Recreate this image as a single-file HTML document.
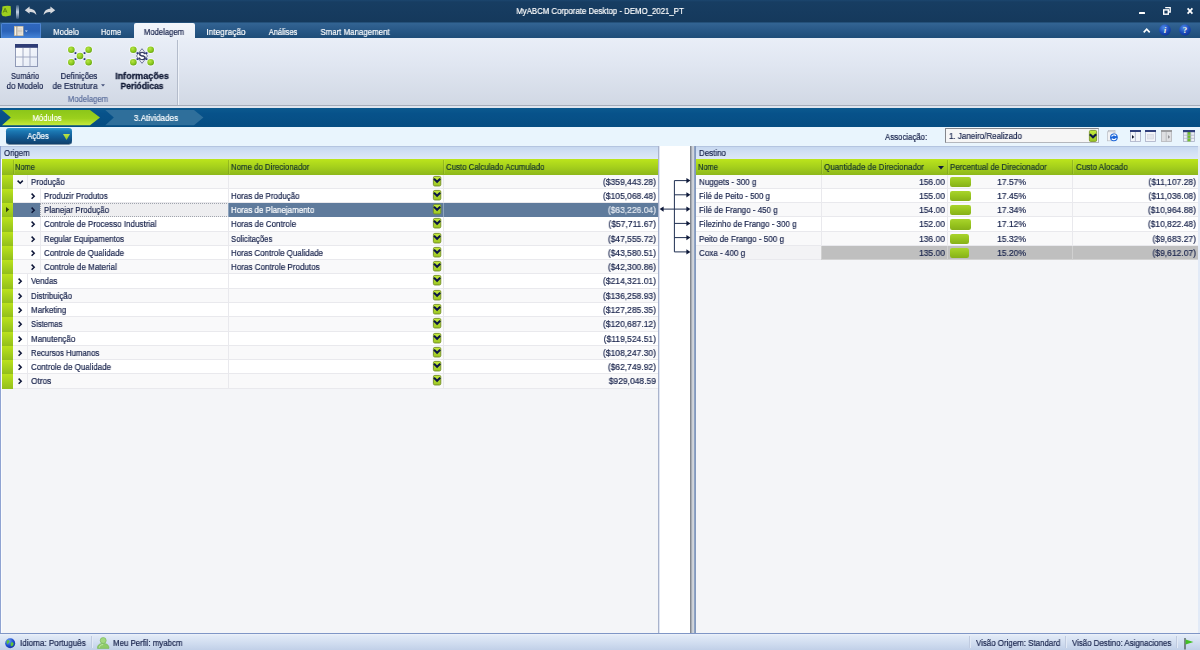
<!DOCTYPE html><html lang="pt"><head><meta charset="utf-8"><title>MyABCM Corporate Desktop - DEMO_2021_PT</title><style>
*{box-sizing:border-box;margin:0;padding:0}
html,body{width:1200px;height:650px;overflow:hidden;background:#f4f5f8}
body{position:relative;font-family:"Liberation Sans",sans-serif;font-size:9.2px;color:#16214a;line-height:10px;white-space:nowrap;-webkit-text-stroke:0.2px}
.a{position:absolute}
.t{position:absolute;height:10px;line-height:10px;will-change:transform;transform-origin:0 50%;transform:scaleX(.856)}
.t.c{transform-origin:50% 50%}
.n{position:absolute;height:10px;line-height:10px;text-align:right;will-change:transform;transform-origin:100% 50%;transform:scaleX(.926)}
.w{color:#fff}
.c{text-align:center}
.b{font-weight:bold}
svg{position:absolute;overflow:visible}
</style></head><body>
<svg width="0" height="0" style="left:0;top:0"><defs><linearGradient id="gcb" x1="0" y1="0" x2="0" y2="1"><stop offset="0" stop-color="#c4ea3c"/><stop offset="1" stop-color="#9cc722"/></linearGradient></defs></svg>
<div class="a" style="left:0px;top:0px;width:1200px;height:22px;background:linear-gradient(#1c466e 0,#173d62 2px,#15395c 100%)"></div>
<svg style="left:1px;top:5px" width="12" height="13" viewBox="0 0 12 13"><path d="M1.4 1.6 Q5 0.2 9.6 1 Q10.4 6 9.8 10.6 Q5 12 1.6 11 Q-0.2 9 0.6 7 Q1.6 4 1.4 1.6 Z" fill="#9ccf1e"/><path d="M2.2 7.6 L4.1 3.2 L6 7.6 M2.9 6.2 H5.3" stroke="#5e8a14" stroke-width="1" fill="none"/></svg>
<div class="a" style="left:16.2px;top:5px;width:2.8px;height:13.5px;background:linear-gradient(#35587c,#c3d2e4 50%,#35587c);border-radius:1.2px"></div>
<svg style="left:24px;top:6px" width="14" height="10" viewBox="0 0 14 10"><path d="M0.8 4.2 L5.6 0.6 L5.6 2.8 C9.5 2.8 12 5 12.4 9 C10.8 6.6 8.8 5.8 5.6 5.9 L5.6 7.8 Z" fill="#d6d9dd"/></svg>
<svg style="left:42px;top:6px" width="14" height="10" viewBox="0 0 14 10"><path d="M13.2 4.2 L8.4 0.6 L8.4 2.8 C4.5 2.8 2 5 1.6 9 C3.2 6.6 5.2 5.8 8.4 5.9 L8.4 7.8 Z" fill="#d6d9dd"/></svg>
<div class="t w c" style="left:399.6px;top:6.3px;width:400px;;transform:scaleX(0.8520)">MyABCM Corporate Desktop - DEMO_2021_PT</div>
<div class="a" style="left:1139.3px;top:12.2px;width:6px;height:2.2px;background:#fff;border-radius:.5px"></div>
<svg style="left:1163px;top:7px" width="8" height="8" viewBox="0 0 8 8"><path d="M2.2 0.6 H7.2 V5 H5.6" fill="none" stroke="#fff" stroke-width="1.3"/><rect x="0.7" y="2.9" width="4.6" height="4.3" fill="none" stroke="#fff" stroke-width="1.4"/></svg>
<svg style="left:1186.5px;top:8px" width="6" height="6" viewBox="0 0 6 6"><path d="M0.6 0.4 L5.4 5.6 M5.4 0.4 L0.6 5.6" stroke="#fff" stroke-width="1.7"/></svg>
<div class="a" style="left:0px;top:22px;width:1200px;height:16px;background:linear-gradient(#1d476e 0,#326392 1.5px,#295988 45%,#1e4c78)"></div>
<div class="a" style="left:1px;top:23px;width:40px;height:15px;background:linear-gradient(#2f67bd,#2a62b8 50%,#4584d8);border:1px solid #4f86d4;border-bottom:none;border-radius:1.5px 1.5px 0 0"></div>
<svg style="left:14px;top:25.5px" width="16" height="10" viewBox="0 0 16 10"><rect x="0.3" y="0.3" width="8.8" height="9.4" fill="#f7f2e8" stroke="#c9b48c" stroke-width=".6"/><path d="M2.9 0.4 V9.6" stroke="#7c7466" stroke-width=".8"/><path d="M5 1.6 V8.6 M7 1.6 V8.6 M3.6 5 H8.4" stroke="#b9b2a6" stroke-width=".7"/><path d="M10.8 4.6 H13.8 L12.3 6.1 Z" fill="#cbd9f0"/></svg>
<div class="a" style="left:134px;top:23px;width:61px;height:15.5px;background:linear-gradient(#f3f6fb,#e9eef7);border-radius:2px 2px 0 0"></div>
<div class="t w c" style="left:15.5px;top:26.6px;width:100px;;transform:scaleX(0.8527)">Modelo</div>
<div class="t w c" style="left:60.8px;top:26.6px;width:100px;;transform:scaleX(0.8158)">Home</div>
<div class="t  c" style="left:113.9px;top:26.6px;width:100px;;transform:scaleX(0.8393)">Modelagem</div>
<div class="t w c" style="left:176.4px;top:26.6px;width:100px;;transform:scaleX(0.9051)">Integração</div>
<div class="t w c" style="left:233.4px;top:26.6px;width:100px;;transform:scaleX(0.8263)">Análises</div>
<div class="t w c" style="left:305.3px;top:26.6px;width:100px;;transform:scaleX(0.8589)">Smart Management</div>
<svg style="left:1143px;top:28px" width="8" height="5" viewBox="0 0 8 5"><path d="M0.7 4.4 L3.7 1.2 L6.7 4.4" fill="none" stroke="#fff" stroke-width="1.6"/></svg>
<svg style="left:1159px;top:24.4px" width="12" height="12" viewBox="0 0 12 12"><defs><radialGradient id="g1" cx=".4" cy=".3" r=".8"><stop offset="0" stop-color="#4f8be8"/><stop offset=".6" stop-color="#1747b8"/><stop offset="1" stop-color="#0d2f88"/></radialGradient></defs><circle cx="6" cy="6" r="5.8" fill="url(#g1)"/><text x="6" y="9" text-anchor="middle" font-family="Liberation Serif,serif" font-size="9" font-weight="bold" font-style="italic" fill="#f4f0dc" letter-spacing="0">i</text></svg>
<svg style="left:1178.6px;top:24.4px" width="12" height="12" viewBox="0 0 12 12"><defs><radialGradient id="g2" cx=".4" cy=".3" r=".8"><stop offset="0" stop-color="#4f8be8"/><stop offset=".6" stop-color="#1747b8"/><stop offset="1" stop-color="#0d2f88"/></radialGradient></defs><circle cx="6" cy="6" r="5.8" fill="url(#g2)"/><text x="6" y="9" text-anchor="middle" font-family="Liberation Serif,serif" font-size="9" font-weight="bold" font-style="normal" fill="#f4f0dc" letter-spacing="0">?</text></svg>
<div class="a" style="left:0px;top:38px;width:1200px;height:67px;background:linear-gradient(#e9eef7,#e0e6f1 40%,#d1d8e4)"></div>
<div class="a" style="left:0px;top:105px;width:1200px;height:1px;background:#a6adba"></div>
<div class="a" style="left:0px;top:106px;width:1200px;height:2px;background:#dfe5ee"></div>
<div class="a" style="left:177px;top:40px;width:1px;height:65px;background:#b4bccb"></div>
<div class="a" style="left:178px;top:40px;width:1px;height:65px;background:#eef2f8"></div>
<svg style="left:14.5px;top:44px" width="23" height="23" viewBox="0 0 23 23"><defs><linearGradient id="gsu" x1="0" y1="0" x2="1" y2="1"><stop offset="0" stop-color="#ffffff"/><stop offset="1" stop-color="#e2e9f5"/></linearGradient></defs><rect x=".5" y=".5" width="22" height="22" fill="url(#gsu)" stroke="#8f99b6"/><rect x="0" y="0" width="23" height="3.8" fill="#2e3c76"/><path d="M.5 13 H22.5 M8 4 V22.5 M15 4 V22.5" stroke="#9aa3bd" stroke-width=".9" fill="none"/></svg>
<div class="t c" style="left:-24.8px;top:71px;width:100px;;transform:scaleX(0.8270)">Sumário</div>
<div class="t c" style="left:-24.7px;top:80.6px;width:100px;;transform:scaleX(0.8554)">do Modelo</div>
<svg style="left:66.7px;top:44.55px" width="26" height="22" viewBox="-13 -11 26 22"><defs><radialGradient id="gn" cx=".4" cy=".35" r=".7"><stop offset="0" stop-color="#b9e645"/><stop offset=".65" stop-color="#86c51c"/><stop offset="1" stop-color="#5f9e10"/></radialGradient></defs><circle cx="-8.65" cy="-6.25" r="4.3" fill="#fff" opacity=".55"/><circle cx="8.65" cy="-6.25" r="4.3" fill="#fff" opacity=".55"/><circle cx="-8.65" cy="6.25" r="4.3" fill="#fff" opacity=".55"/><circle cx="8.65" cy="6.25" r="4.3" fill="#fff" opacity=".55"/><rect x="-5.4" y="-3.8" width="1.8" height="1.8" fill="#27307a"/><rect x="3.6" y="-3.8" width="1.8" height="1.8" fill="#27307a"/><rect x="-5.4" y="2.2" width="1.8" height="1.8" fill="#27307a"/><rect x="3.6" y="2.2" width="1.8" height="1.8" fill="#27307a"/><circle cx="-8.65" cy="-6.25" r="3.3" fill="url(#gn)"/><circle cx="8.65" cy="-6.25" r="3.3" fill="url(#gn)"/><circle cx="-8.65" cy="6.25" r="3.3" fill="url(#gn)"/><circle cx="8.65" cy="6.25" r="3.3" fill="url(#gn)"/><circle cx="0" cy="0" r="4.3" fill="#fff" opacity=".55"/><circle cx="0" cy="0" r="3.3" fill="url(#gn)"/></svg>
<div class="t c" style="left:28.7px;top:71px;width:100px;;transform:scaleX(0.8554)">Definições</div>
<div class="t c" style="left:24.5px;top:80.6px;width:100px;;transform:scaleX(0.8992)">de Estrutura</div>
<svg style="left:100.5px;top:84px" width="4" height="3" viewBox="0 0 4 3"><path d="M0 .3 H4 L2 2.6 Z" fill="#44507a"/></svg>
<svg style="left:128.8px;top:44.55px" width="26" height="22" viewBox="-13 -11 26 22"><defs><radialGradient id="gn" cx=".4" cy=".35" r=".7"><stop offset="0" stop-color="#b9e645"/><stop offset=".65" stop-color="#86c51c"/><stop offset="1" stop-color="#5f9e10"/></radialGradient></defs><circle cx="-8.65" cy="-6.25" r="4.3" fill="#fff" opacity=".55"/><circle cx="8.65" cy="-6.25" r="4.3" fill="#fff" opacity=".55"/><circle cx="-8.65" cy="6.25" r="4.3" fill="#fff" opacity=".55"/><circle cx="8.65" cy="6.25" r="4.3" fill="#fff" opacity=".55"/><path d="M0 -7.3 L5.5 0 L0 7.3 L-5.5 0 Z" fill="#fbfcfe" stroke="#3b4270" stroke-width=".7"/><rect x="-5.4" y="-3.8" width="1.8" height="1.8" fill="#27307a"/><rect x="3.6" y="-3.8" width="1.8" height="1.8" fill="#27307a"/><rect x="-5.4" y="2.2" width="1.8" height="1.8" fill="#27307a"/><rect x="3.6" y="2.2" width="1.8" height="1.8" fill="#27307a"/><circle cx="-8.65" cy="-6.25" r="3.3" fill="url(#gn)"/><circle cx="8.65" cy="-6.25" r="3.3" fill="url(#gn)"/><circle cx="-8.65" cy="6.25" r="3.3" fill="url(#gn)"/><circle cx="8.65" cy="6.25" r="3.3" fill="url(#gn)"/><text x="0" y="4" text-anchor="middle" font-family="Liberation Sans,sans-serif" font-size="11.5" fill="#2a3058" stroke="#2a3058" stroke-width=".45" letter-spacing="0">S</text></svg>
<div class="t c b" style="left:91.8px;top:71px;width:100px;color:#0e1733;-webkit-text-stroke:.3px;transform:scaleX(0.9828)">Informações</div>
<div class="t c b" style="left:91.8px;top:80.6px;width:100px;color:#0e1733;-webkit-text-stroke:.3px;transform:scaleX(0.9250)">Periódicas</div>
<div class="t c" style="left:38.2px;top:94px;width:100px;color:#5b6e9c;transform:scaleX(0.8393)">Modelagem</div>
<div class="a" style="left:0px;top:108px;width:1200px;height:19px;background:linear-gradient(#0b598f,#07528a 30%,#064d82)"></div>
<svg style="left:0;top:109.7px" width="210" height="16" viewBox="0 0 210 16"><defs><linearGradient id="gg" x1="0" y1="0" x2="0" y2="1"><stop offset="0" stop-color="#8cc61a"/><stop offset=".55" stop-color="#9bd01c"/><stop offset="1" stop-color="#c6ea3c"/></linearGradient></defs><path d="M2 0 H90 L100 7.6 L90 15.2 H2 L10.8 7.6 Z" fill="url(#gg)"/><path d="M105.3 0 H194 L203.4 7.6 L194 15.2 H105.3 L113.8 7.6 Z" fill="#2f6f9b"/></svg>
<div class="t w c" style="left:-2.9px;top:112.5px;width:100px;;transform:scaleX(0.8407)">Módulos</div>
<div class="t w c" style="left:105.8px;top:112.5px;width:100px;;transform:scaleX(0.8849)">3.Atividades</div>
<div class="a" style="left:0px;top:127px;width:1200px;height:19px;background:#e9f5fd"></div>
<div class="a" style="left:5.8px;top:127.8px;width:66.2px;height:16.6px;background:linear-gradient(#2b9ad2 0,#1c7ab4 18%,#13609a 50%,#0f3f6c 100%);border-radius:3.2px;box-shadow:0 .4px .6px #0b2d4e"></div>
<div class="t w c" style="left:-11.8px;top:131.4px;width:100px;;transform:scaleX(0.8416)">Ações</div>
<svg style="left:62.9px;top:134px" width="7" height="5.9" viewBox="0 0 7 5.9"><defs><linearGradient id="gtr" x1="0" y1="0" x2="0" y2="1"><stop offset="0" stop-color="#bde34e"/><stop offset="1" stop-color="#8ac81e"/></linearGradient></defs><path d="M0 0 H7 L3.5 5.9 Z" fill="url(#gtr)"/></svg>
<div class="t " style="left:885.3px;top:131.5px;;transform:scaleX(0.8517)">Associação:</div>
<div class="a" style="left:945px;top:128px;width:154px;height:15px;background:#f6f6f6;border:1px solid;border-color:#83868c #b4b7bd #b4b7bd #83868c"></div>
<div class="t " style="left:948.6px;top:131px;;transform:scaleX(0.8703)">1. Janeiro/Realizado</div>
<svg style="left:1089.3px;top:130px" width="8" height="11.8" viewBox="0 0 8 11.8"><rect x=".4" y=".4" width="7.2" height="11" rx="1.2" fill="url(#gcb)" stroke="#7b962a" stroke-width=".9"/><path d="M.8 4.2 L4 7.3 L7.2 4.2" fill="none" stroke="#0c1646" stroke-width="2.1"/></svg>
<svg style="left:1106.8px;top:130px" width="11" height="12" viewBox="0 0 11 12"><rect x="1.5" y=".5" width="6.5" height="9" fill="#e9ebee" stroke="#b9bdc4" stroke-width=".7"/><rect x=".5" y="1.8" width="6.5" height="9" fill="#f1f2f4" stroke="#b9bdc4" stroke-width=".7"/><circle cx="6.9" cy="7.3" r="3.9" fill="#1c66d8"/><path d="M4.6 6.4 A2.6 2.6 0 0 1 9 6 M9.2 8.2 A2.6 2.6 0 0 1 4.8 8.6" stroke="#fff" stroke-width="1.2" fill="none"/></svg>
<svg style="left:1130px;top:130px" width="11" height="11.8" viewBox="0 0 11 11.8"><rect x=".4" y=".4" width="10.2" height="11" fill="#f3f4f8" stroke="#a9afc6" stroke-width=".8"/><rect x="0" y="0" width="11" height="2" fill="#2f3f7c"/><path d="M5.4 2 V11.4" stroke="#a9afc6" stroke-width=".8"/><path d="M2 5 L4.3 6.9 L2 8.8 Z" fill="#10152e"/></svg>
<svg style="left:1145px;top:130px" width="11" height="11.8" viewBox="0 0 11 11.8"><rect x=".4" y=".4" width="10.2" height="11" fill="#f3f4f8" stroke="#a9afc6" stroke-width=".8"/><rect x="0" y="0" width="11" height="2" fill="#2f3f7c"/><rect x="2.6" y="4.6" width="5.8" height="4.4" fill="#e3e5ec" stroke="#cfd3df" stroke-width=".6"/></svg>
<svg style="left:1160.5px;top:130px" width="11" height="11.8" viewBox="0 0 11 11.8"><rect x=".4" y=".4" width="10.2" height="11" fill="#dedfe2" stroke="#b4b5b9" stroke-width=".8"/><rect x="0" y="0" width="11" height="2" fill="#9c9da0"/><path d="M5.2 2 V11.4" stroke="#b4b5b9" stroke-width=".8"/><path d="M7 5 L9.2 6.9 L7 8.8 Z" fill="#8f9094"/></svg>
<svg style="left:1183.2px;top:130px" width="12" height="11.8" viewBox="0 0 12 11.8"><rect x=".4" y=".4" width="11.2" height="11" fill="#eef0f6" stroke="#a9afc6" stroke-width=".8"/><rect x="4.2" y="2" width="3.6" height="9.4" fill="#74c02c"/><rect x="0" y="0" width="12" height="2.2" fill="#2f3f7c"/><path d="M.4 5.2 H11.6 M.4 8.3 H11.6 M4.2 2 V11.4 M7.8 2 V11.4" stroke="#a9afc6" stroke-width=".7" fill="none"/></svg>
<div class="a" style="left:0px;top:146px;width:659px;height:487px;background:#f4f5f8;border-left:1px solid #8fa3d2;border-right:1px solid #a9b3cc"></div>
<div class="a" style="left:1px;top:146px;width:1px;height:487px;background:#fbfcfe"></div>
<div class="a" style="left:659px;top:146px;width:1px;height:487px;background:#dfe5f3"></div>
<div class="a" style="left:1px;top:146px;width:657px;height:13px;background:linear-gradient(#c7d8f0,#d3e1f4 50%,#dde8f7);border-top:1px solid #b4c5e0"></div>
<div class="t " style="left:3.8px;top:147.9px;;transform:scaleX(0.8498)">Origem</div>
<div class="a" style="left:2px;top:159px;width:656px;height:16px;background:linear-gradient(#bce51c,#a5d01c 50%,#8db71b)"></div>
<div class="a" style="left:660px;top:146px;width:30px;height:487px;background:#fff"></div>
<div class="a" style="left:690px;top:146px;width:5px;height:487px;background:linear-gradient(90deg,#7e838b 0,#8b9098 1.3px,#c5c9d0 1.7px,#d6dae0 4.3px,#8fa3c4 4.5px)"></div>
<div class="a" style="left:695px;top:146px;width:505px;height:487px;background:#f4f5f8;border-left:1px solid #8298bd"></div>
<div class="a" style="left:696px;top:146px;width:504px;height:13px;background:linear-gradient(#c7d8f0,#d3e1f4 50%,#dde8f7);border-top:1px solid #b4c5e0"></div>
<div class="t " style="left:698.8px;top:147.9px;;transform:scaleX(0.8634)">Destino</div>
<div class="a" style="left:696px;top:159px;width:502px;height:16px;background:linear-gradient(#bce51c,#a5d01c 50%,#8db71b)"></div>
<div class="a" style="left:1198px;top:146px;width:2px;height:487px;background:#e2eaf7"></div>
<div class="a" style="left:13px;top:160px;width:1px;height:14px;background:rgba(110,140,30,.42)"></div>
<div class="a" style="left:14px;top:160px;width:1px;height:14px;background:rgba(215,240,120,.22)"></div>
<div class="a" style="left:228px;top:160px;width:1px;height:14px;background:rgba(110,140,30,.42)"></div>
<div class="a" style="left:229px;top:160px;width:1px;height:14px;background:rgba(215,240,120,.22)"></div>
<div class="a" style="left:443px;top:160px;width:1px;height:14px;background:rgba(110,140,30,.42)"></div>
<div class="a" style="left:444px;top:160px;width:1px;height:14px;background:rgba(215,240,120,.22)"></div>
<div class="t " style="left:15.4px;top:161.8px;color:#17352c;transform:scaleX(0.8076)">Nome</div>
<div class="t " style="left:231px;top:161.8px;color:#17352c;transform:scaleX(0.8518)">Nome do Direcionador</div>
<div class="t " style="left:445.5px;top:161.8px;color:#17352c;transform:scaleX(0.8534)">Custo Calculado Acumulado</div>
<div class="a" style="left:821px;top:160px;width:1px;height:14px;background:rgba(110,140,30,.42)"></div>
<div class="a" style="left:822px;top:160px;width:1px;height:14px;background:rgba(215,240,120,.22)"></div>
<div class="a" style="left:947px;top:160px;width:1px;height:14px;background:rgba(110,140,30,.42)"></div>
<div class="a" style="left:948px;top:160px;width:1px;height:14px;background:rgba(215,240,120,.22)"></div>
<div class="a" style="left:1072px;top:160px;width:1px;height:14px;background:rgba(110,140,30,.42)"></div>
<div class="a" style="left:1073px;top:160px;width:1px;height:14px;background:rgba(215,240,120,.22)"></div>
<div class="t " style="left:698.4px;top:161.8px;color:#17352c;transform:scaleX(0.8076)">Nome</div>
<div class="t " style="left:824px;top:161.8px;color:#17352c;transform:scaleX(0.8702)">Quantidade de Direcionador</div>
<div class="t " style="left:950px;top:161.8px;color:#17352c;transform:scaleX(0.8685)">Percentual de Direcionador</div>
<div class="t " style="left:1075.6px;top:161.8px;color:#17352c;transform:scaleX(0.8726)">Custo Alocado</div>
<svg style="left:937.5px;top:165.8px" width="6" height="3.4" viewBox="0 0 6 3.4"><path d="M0 0 H6 L3 3.4 Z" fill="#0f1a3c"/></svg>
<div class="a" style="left:2px;top:175px;width:11px;height:14px;background:linear-gradient(#bbe21c,#a6d11c 50%,#93bf1b)"></div>
<div class="a" style="left:13px;top:175px;width:645px;height:14px;background:#f9f9fa;border-bottom:1px solid #e9e9ed"></div>
<div class="a" style="left:27px;top:175px;width:1px;height:14px;background:#e9e9ed"></div>
<div class="a" style="left:228px;top:175px;width:1px;height:14px;background:#e9e9ed"></div>
<div class="a" style="left:443px;top:175px;width:1px;height:14px;background:#e9e9ed"></div>
<svg style="left:17px;top:180.2px" width="6.4" height="4" viewBox="0 0 6.4 4"><path d="M.6 .6 L3.2 3.2 L5.8 .6" fill="none" stroke="#0d1638" stroke-width="1.5"/></svg>
<div class="t " style="left:30.9px;top:177px;;transform:scaleX(0.8566)">Produção</div>
<svg style="left:432.8px;top:176.2px" width="8.2" height="10.4" viewBox="0 0 8.2 10.4"><rect x=".4" y=".4" width="7.4" height="9.6" rx="1.4" fill="url(#gcb)" stroke="#728c26" stroke-width=".9"/><path d="M0.984 2.808 L4.1 5.824 L7.216 2.808" fill="none" stroke="#0c1646" stroke-width="2"/></svg>
<div class="n " style="left:535.8px;width:120px;top:177px;">($359,443.28)</div>
<div class="a" style="left:2px;top:189px;width:11px;height:14px;background:linear-gradient(#bbe21c,#a6d11c 50%,#93bf1b)"></div>
<div class="a" style="left:13px;top:189px;width:645px;height:14px;background:#ffffff;border-bottom:1px solid #e9e9ed"></div>
<div class="a" style="left:40px;top:189px;width:1px;height:14px;background:#e9e9ed"></div>
<div class="a" style="left:228px;top:189px;width:1px;height:14px;background:#e9e9ed"></div>
<div class="a" style="left:443px;top:189px;width:1px;height:14px;background:#e9e9ed"></div>
<svg style="left:31.2px;top:192.8px" width="4" height="6.4" viewBox="0 0 4 6.4"><path d="M.6 .6 L3.2 3.2 L.6 5.8" fill="none" stroke="#0d1638" stroke-width="1.5"/></svg>
<div class="t " style="left:43.9px;top:191px;;transform:scaleX(0.8668)">Produzir Produtos</div>
<div class="t " style="left:231.1px;top:191px;;transform:scaleX(0.8652)">Horas de Produção</div>
<svg style="left:432.8px;top:190.2px" width="8.2" height="10.4" viewBox="0 0 8.2 10.4"><rect x=".4" y=".4" width="7.4" height="9.6" rx="1.4" fill="url(#gcb)" stroke="#728c26" stroke-width=".9"/><path d="M0.984 2.808 L4.1 5.824 L7.216 2.808" fill="none" stroke="#0c1646" stroke-width="2"/></svg>
<div class="n " style="left:535.8px;width:120px;top:191px;">($105,068.48)</div>
<div class="a" style="left:2px;top:203px;width:11px;height:14px;background:linear-gradient(#bbe21c,#a6d11c 50%,#93bf1b)"></div>
<div class="a" style="left:13px;top:203px;width:645px;height:14px;background:#f9f9fa;border-bottom:1px solid #e9e9ed"></div>
<div class="a" style="left:13px;top:203px;width:645px;height:14px;background:#5f7b9c"></div>
<div class="a" style="left:40px;top:203px;width:189px;height:14px;background:#eeeef0;border:1px dotted #a0a4ad"></div>
<svg style="left:5.8px;top:207.2px" width="3.2" height="5.2" viewBox="0 0 3.2 5.2"><path d="M0 0 L3.2 2.6 L0 5.2 Z" fill="#2c3e10"/></svg>
<div class="a" style="left:228px;top:203px;width:1px;height:14px;background:#8ea3bd"></div>
<div class="a" style="left:443px;top:203px;width:1px;height:14px;background:#8ea3bd"></div>
<svg style="left:31.2px;top:206.8px" width="4" height="6.4" viewBox="0 0 4 6.4"><path d="M.6 .6 L3.2 3.2 L.6 5.8" fill="none" stroke="#0d1638" stroke-width="1.5"/></svg>
<div class="t " style="left:43.9px;top:205px;;transform:scaleX(0.8612)">Planejar Produção</div>
<div class="t w" style="left:231.1px;top:205px;;transform:scaleX(0.8669)">Horas de Planejamento</div>
<svg style="left:432.8px;top:204.2px" width="8.2" height="10.4" viewBox="0 0 8.2 10.4"><rect x=".4" y=".4" width="7.4" height="9.6" rx="1.4" fill="url(#gcb)" stroke="#728c26" stroke-width=".9"/><path d="M0.984 2.808 L4.1 5.824 L7.216 2.808" fill="none" stroke="#0c1646" stroke-width="2"/></svg>
<div class="n w" style="left:535.8px;width:120px;top:205px;color:#e6ebf2">($63,226.04)</div>
<div class="a" style="left:2px;top:217px;width:11px;height:15px;background:linear-gradient(#bbe21c,#a6d11c 50%,#93bf1b)"></div>
<div class="a" style="left:13px;top:217px;width:645px;height:15px;background:#ffffff;border-bottom:1px solid #e9e9ed"></div>
<div class="a" style="left:40px;top:217px;width:1px;height:15px;background:#e9e9ed"></div>
<div class="a" style="left:228px;top:217px;width:1px;height:15px;background:#e9e9ed"></div>
<div class="a" style="left:443px;top:217px;width:1px;height:15px;background:#e9e9ed"></div>
<svg style="left:31.2px;top:220.8px" width="4" height="6.4" viewBox="0 0 4 6.4"><path d="M.6 .6 L3.2 3.2 L.6 5.8" fill="none" stroke="#0d1638" stroke-width="1.5"/></svg>
<div class="t " style="left:43.9px;top:219px;;transform:scaleX(0.8776)">Controle de Processo Industrial</div>
<div class="t " style="left:231.1px;top:219px;;transform:scaleX(0.8731)">Horas de Controle</div>
<svg style="left:432.8px;top:218.2px" width="8.2" height="10.4" viewBox="0 0 8.2 10.4"><rect x=".4" y=".4" width="7.4" height="9.6" rx="1.4" fill="url(#gcb)" stroke="#728c26" stroke-width=".9"/><path d="M0.984 2.808 L4.1 5.824 L7.216 2.808" fill="none" stroke="#0c1646" stroke-width="2"/></svg>
<div class="n " style="left:535.8px;width:120px;top:219px;">($57,711.67)</div>
<div class="a" style="left:2px;top:232px;width:11px;height:14px;background:linear-gradient(#bbe21c,#a6d11c 50%,#93bf1b)"></div>
<div class="a" style="left:13px;top:232px;width:645px;height:14px;background:#f9f9fa;border-bottom:1px solid #e9e9ed"></div>
<div class="a" style="left:40px;top:232px;width:1px;height:14px;background:#e9e9ed"></div>
<div class="a" style="left:228px;top:232px;width:1px;height:14px;background:#e9e9ed"></div>
<div class="a" style="left:443px;top:232px;width:1px;height:14px;background:#e9e9ed"></div>
<svg style="left:31.2px;top:235.8px" width="4" height="6.4" viewBox="0 0 4 6.4"><path d="M.6 .6 L3.2 3.2 L.6 5.8" fill="none" stroke="#0d1638" stroke-width="1.5"/></svg>
<div class="t " style="left:43.9px;top:234px;;transform:scaleX(0.8570)">Regular Equipamentos</div>
<div class="t " style="left:231.1px;top:234px;;transform:scaleX(0.8423)">Solicitações</div>
<svg style="left:432.8px;top:233.2px" width="8.2" height="10.4" viewBox="0 0 8.2 10.4"><rect x=".4" y=".4" width="7.4" height="9.6" rx="1.4" fill="url(#gcb)" stroke="#728c26" stroke-width=".9"/><path d="M0.984 2.808 L4.1 5.824 L7.216 2.808" fill="none" stroke="#0c1646" stroke-width="2"/></svg>
<div class="n " style="left:535.8px;width:120px;top:234px;">($47,555.72)</div>
<div class="a" style="left:2px;top:246px;width:11px;height:14px;background:linear-gradient(#bbe21c,#a6d11c 50%,#93bf1b)"></div>
<div class="a" style="left:13px;top:246px;width:645px;height:14px;background:#ffffff;border-bottom:1px solid #e9e9ed"></div>
<div class="a" style="left:40px;top:246px;width:1px;height:14px;background:#e9e9ed"></div>
<div class="a" style="left:228px;top:246px;width:1px;height:14px;background:#e9e9ed"></div>
<div class="a" style="left:443px;top:246px;width:1px;height:14px;background:#e9e9ed"></div>
<svg style="left:31.2px;top:249.8px" width="4" height="6.4" viewBox="0 0 4 6.4"><path d="M.6 .6 L3.2 3.2 L.6 5.8" fill="none" stroke="#0d1638" stroke-width="1.5"/></svg>
<div class="t " style="left:43.9px;top:248px;;transform:scaleX(0.8711)">Controle de Qualidade</div>
<div class="t " style="left:231.1px;top:248px;;transform:scaleX(0.8660)">Horas Controle Qualidade</div>
<svg style="left:432.8px;top:247.2px" width="8.2" height="10.4" viewBox="0 0 8.2 10.4"><rect x=".4" y=".4" width="7.4" height="9.6" rx="1.4" fill="url(#gcb)" stroke="#728c26" stroke-width=".9"/><path d="M0.984 2.808 L4.1 5.824 L7.216 2.808" fill="none" stroke="#0c1646" stroke-width="2"/></svg>
<div class="n " style="left:535.8px;width:120px;top:248px;">($43,580.51)</div>
<div class="a" style="left:2px;top:260px;width:11px;height:14px;background:linear-gradient(#bbe21c,#a6d11c 50%,#93bf1b)"></div>
<div class="a" style="left:13px;top:260px;width:645px;height:14px;background:#f9f9fa;border-bottom:1px solid #e9e9ed"></div>
<div class="a" style="left:40px;top:260px;width:1px;height:14px;background:#e9e9ed"></div>
<div class="a" style="left:228px;top:260px;width:1px;height:14px;background:#e9e9ed"></div>
<div class="a" style="left:443px;top:260px;width:1px;height:14px;background:#e9e9ed"></div>
<svg style="left:31.2px;top:263.8px" width="4" height="6.4" viewBox="0 0 4 6.4"><path d="M.6 .6 L3.2 3.2 L.6 5.8" fill="none" stroke="#0d1638" stroke-width="1.5"/></svg>
<div class="t " style="left:43.9px;top:262px;;transform:scaleX(0.8811)">Controle de Material</div>
<div class="t " style="left:231.1px;top:262px;;transform:scaleX(0.8771)">Horas Controle Produtos</div>
<svg style="left:432.8px;top:261.2px" width="8.2" height="10.4" viewBox="0 0 8.2 10.4"><rect x=".4" y=".4" width="7.4" height="9.6" rx="1.4" fill="url(#gcb)" stroke="#728c26" stroke-width=".9"/><path d="M0.984 2.808 L4.1 5.824 L7.216 2.808" fill="none" stroke="#0c1646" stroke-width="2"/></svg>
<div class="n " style="left:535.8px;width:120px;top:262px;">($42,300.86)</div>
<div class="a" style="left:2px;top:274px;width:11px;height:15px;background:linear-gradient(#bbe21c,#a6d11c 50%,#93bf1b)"></div>
<div class="a" style="left:13px;top:274px;width:645px;height:15px;background:#ffffff;border-bottom:1px solid #e9e9ed"></div>
<div class="a" style="left:27px;top:274px;width:1px;height:15px;background:#e9e9ed"></div>
<div class="a" style="left:228px;top:274px;width:1px;height:15px;background:#e9e9ed"></div>
<div class="a" style="left:443px;top:274px;width:1px;height:15px;background:#e9e9ed"></div>
<svg style="left:18px;top:277.8px" width="4" height="6.4" viewBox="0 0 4 6.4"><path d="M.6 .6 L3.2 3.2 L.6 5.8" fill="none" stroke="#0d1638" stroke-width="1.5"/></svg>
<div class="t " style="left:30.9px;top:276px;;transform:scaleX(0.8579)">Vendas</div>
<svg style="left:432.8px;top:275.2px" width="8.2" height="10.4" viewBox="0 0 8.2 10.4"><rect x=".4" y=".4" width="7.4" height="9.6" rx="1.4" fill="url(#gcb)" stroke="#728c26" stroke-width=".9"/><path d="M0.984 2.808 L4.1 5.824 L7.216 2.808" fill="none" stroke="#0c1646" stroke-width="2"/></svg>
<div class="n " style="left:535.8px;width:120px;top:276px;">($214,321.01)</div>
<div class="a" style="left:2px;top:289px;width:11px;height:14px;background:linear-gradient(#bbe21c,#a6d11c 50%,#93bf1b)"></div>
<div class="a" style="left:13px;top:289px;width:645px;height:14px;background:#f9f9fa;border-bottom:1px solid #e9e9ed"></div>
<div class="a" style="left:27px;top:289px;width:1px;height:14px;background:#e9e9ed"></div>
<div class="a" style="left:228px;top:289px;width:1px;height:14px;background:#e9e9ed"></div>
<div class="a" style="left:443px;top:289px;width:1px;height:14px;background:#e9e9ed"></div>
<svg style="left:18px;top:292.8px" width="4" height="6.4" viewBox="0 0 4 6.4"><path d="M.6 .6 L3.2 3.2 L.6 5.8" fill="none" stroke="#0d1638" stroke-width="1.5"/></svg>
<div class="t " style="left:30.9px;top:291px;;transform:scaleX(0.8542)">Distribuição</div>
<svg style="left:432.8px;top:290.2px" width="8.2" height="10.4" viewBox="0 0 8.2 10.4"><rect x=".4" y=".4" width="7.4" height="9.6" rx="1.4" fill="url(#gcb)" stroke="#728c26" stroke-width=".9"/><path d="M0.984 2.808 L4.1 5.824 L7.216 2.808" fill="none" stroke="#0c1646" stroke-width="2"/></svg>
<div class="n " style="left:535.8px;width:120px;top:291px;">($136,258.93)</div>
<div class="a" style="left:2px;top:303px;width:11px;height:14px;background:linear-gradient(#bbe21c,#a6d11c 50%,#93bf1b)"></div>
<div class="a" style="left:13px;top:303px;width:645px;height:14px;background:#ffffff;border-bottom:1px solid #e9e9ed"></div>
<div class="a" style="left:27px;top:303px;width:1px;height:14px;background:#e9e9ed"></div>
<div class="a" style="left:228px;top:303px;width:1px;height:14px;background:#e9e9ed"></div>
<div class="a" style="left:443px;top:303px;width:1px;height:14px;background:#e9e9ed"></div>
<svg style="left:18px;top:306.8px" width="4" height="6.4" viewBox="0 0 4 6.4"><path d="M.6 .6 L3.2 3.2 L.6 5.8" fill="none" stroke="#0d1638" stroke-width="1.5"/></svg>
<div class="t " style="left:30.9px;top:305px;;transform:scaleX(0.8750)">Marketing</div>
<svg style="left:432.8px;top:304.2px" width="8.2" height="10.4" viewBox="0 0 8.2 10.4"><rect x=".4" y=".4" width="7.4" height="9.6" rx="1.4" fill="url(#gcb)" stroke="#728c26" stroke-width=".9"/><path d="M0.984 2.808 L4.1 5.824 L7.216 2.808" fill="none" stroke="#0c1646" stroke-width="2"/></svg>
<div class="n " style="left:535.8px;width:120px;top:305px;">($127,285.35)</div>
<div class="a" style="left:2px;top:317px;width:11px;height:15px;background:linear-gradient(#bbe21c,#a6d11c 50%,#93bf1b)"></div>
<div class="a" style="left:13px;top:317px;width:645px;height:15px;background:#f9f9fa;border-bottom:1px solid #e9e9ed"></div>
<div class="a" style="left:27px;top:317px;width:1px;height:15px;background:#e9e9ed"></div>
<div class="a" style="left:228px;top:317px;width:1px;height:15px;background:#e9e9ed"></div>
<div class="a" style="left:443px;top:317px;width:1px;height:15px;background:#e9e9ed"></div>
<svg style="left:18px;top:320.8px" width="4" height="6.4" viewBox="0 0 4 6.4"><path d="M.6 .6 L3.2 3.2 L.6 5.8" fill="none" stroke="#0d1638" stroke-width="1.5"/></svg>
<div class="t " style="left:30.9px;top:319px;;transform:scaleX(0.8281)">Sistemas</div>
<svg style="left:432.8px;top:318.2px" width="8.2" height="10.4" viewBox="0 0 8.2 10.4"><rect x=".4" y=".4" width="7.4" height="9.6" rx="1.4" fill="url(#gcb)" stroke="#728c26" stroke-width=".9"/><path d="M0.984 2.808 L4.1 5.824 L7.216 2.808" fill="none" stroke="#0c1646" stroke-width="2"/></svg>
<div class="n " style="left:535.8px;width:120px;top:319px;">($120,687.12)</div>
<div class="a" style="left:2px;top:332px;width:11px;height:14px;background:linear-gradient(#bbe21c,#a6d11c 50%,#93bf1b)"></div>
<div class="a" style="left:13px;top:332px;width:645px;height:14px;background:#ffffff;border-bottom:1px solid #e9e9ed"></div>
<div class="a" style="left:27px;top:332px;width:1px;height:14px;background:#e9e9ed"></div>
<div class="a" style="left:228px;top:332px;width:1px;height:14px;background:#e9e9ed"></div>
<div class="a" style="left:443px;top:332px;width:1px;height:14px;background:#e9e9ed"></div>
<svg style="left:18px;top:335.8px" width="4" height="6.4" viewBox="0 0 4 6.4"><path d="M.6 .6 L3.2 3.2 L.6 5.8" fill="none" stroke="#0d1638" stroke-width="1.5"/></svg>
<div class="t " style="left:30.9px;top:334px;;transform:scaleX(0.8759)">Manutenção</div>
<svg style="left:432.8px;top:333.2px" width="8.2" height="10.4" viewBox="0 0 8.2 10.4"><rect x=".4" y=".4" width="7.4" height="9.6" rx="1.4" fill="url(#gcb)" stroke="#728c26" stroke-width=".9"/><path d="M0.984 2.808 L4.1 5.824 L7.216 2.808" fill="none" stroke="#0c1646" stroke-width="2"/></svg>
<div class="n " style="left:535.8px;width:120px;top:334px;">($119,524.51)</div>
<div class="a" style="left:2px;top:346px;width:11px;height:14px;background:linear-gradient(#bbe21c,#a6d11c 50%,#93bf1b)"></div>
<div class="a" style="left:13px;top:346px;width:645px;height:14px;background:#f9f9fa;border-bottom:1px solid #e9e9ed"></div>
<div class="a" style="left:27px;top:346px;width:1px;height:14px;background:#e9e9ed"></div>
<div class="a" style="left:228px;top:346px;width:1px;height:14px;background:#e9e9ed"></div>
<div class="a" style="left:443px;top:346px;width:1px;height:14px;background:#e9e9ed"></div>
<svg style="left:18px;top:349.8px" width="4" height="6.4" viewBox="0 0 4 6.4"><path d="M.6 .6 L3.2 3.2 L.6 5.8" fill="none" stroke="#0d1638" stroke-width="1.5"/></svg>
<div class="t " style="left:30.9px;top:348px;;transform:scaleX(0.8465)">Recursos Humanos</div>
<svg style="left:432.8px;top:347.2px" width="8.2" height="10.4" viewBox="0 0 8.2 10.4"><rect x=".4" y=".4" width="7.4" height="9.6" rx="1.4" fill="url(#gcb)" stroke="#728c26" stroke-width=".9"/><path d="M0.984 2.808 L4.1 5.824 L7.216 2.808" fill="none" stroke="#0c1646" stroke-width="2"/></svg>
<div class="n " style="left:535.8px;width:120px;top:348px;">($108,247.30)</div>
<div class="a" style="left:2px;top:360px;width:11px;height:14px;background:linear-gradient(#bbe21c,#a6d11c 50%,#93bf1b)"></div>
<div class="a" style="left:13px;top:360px;width:645px;height:14px;background:#ffffff;border-bottom:1px solid #e9e9ed"></div>
<div class="a" style="left:27px;top:360px;width:1px;height:14px;background:#e9e9ed"></div>
<div class="a" style="left:228px;top:360px;width:1px;height:14px;background:#e9e9ed"></div>
<div class="a" style="left:443px;top:360px;width:1px;height:14px;background:#e9e9ed"></div>
<svg style="left:18px;top:363.8px" width="4" height="6.4" viewBox="0 0 4 6.4"><path d="M.6 .6 L3.2 3.2 L.6 5.8" fill="none" stroke="#0d1638" stroke-width="1.5"/></svg>
<div class="t " style="left:30.9px;top:362px;;transform:scaleX(0.8711)">Controle de Qualidade</div>
<svg style="left:432.8px;top:361.2px" width="8.2" height="10.4" viewBox="0 0 8.2 10.4"><rect x=".4" y=".4" width="7.4" height="9.6" rx="1.4" fill="url(#gcb)" stroke="#728c26" stroke-width=".9"/><path d="M0.984 2.808 L4.1 5.824 L7.216 2.808" fill="none" stroke="#0c1646" stroke-width="2"/></svg>
<div class="n " style="left:535.8px;width:120px;top:362px;">($62,749.92)</div>
<div class="a" style="left:2px;top:374px;width:11px;height:15px;background:linear-gradient(#bbe21c,#a6d11c 50%,#93bf1b)"></div>
<div class="a" style="left:13px;top:374px;width:645px;height:15px;background:#f9f9fa;border-bottom:1px solid #e9e9ed"></div>
<div class="a" style="left:27px;top:374px;width:1px;height:15px;background:#e9e9ed"></div>
<div class="a" style="left:228px;top:374px;width:1px;height:15px;background:#e9e9ed"></div>
<div class="a" style="left:443px;top:374px;width:1px;height:15px;background:#e9e9ed"></div>
<svg style="left:18px;top:377.8px" width="4" height="6.4" viewBox="0 0 4 6.4"><path d="M.6 .6 L3.2 3.2 L.6 5.8" fill="none" stroke="#0d1638" stroke-width="1.5"/></svg>
<div class="t " style="left:30.9px;top:376px;;transform:scaleX(0.9035)">Otros</div>
<svg style="left:432.8px;top:375.2px" width="8.2" height="10.4" viewBox="0 0 8.2 10.4"><rect x=".4" y=".4" width="7.4" height="9.6" rx="1.4" fill="url(#gcb)" stroke="#728c26" stroke-width=".9"/><path d="M0.984 2.808 L4.1 5.824 L7.216 2.808" fill="none" stroke="#0c1646" stroke-width="2"/></svg>
<div class="n " style="left:535.8px;width:120px;top:376px;">$929,048.59</div>
<div class="a" style="left:696px;top:175px;width:502px;height:14px;background:#f9f9fa;border-bottom:1px solid #e9e9ed"></div>
<div class="a" style="left:821px;top:175px;width:1px;height:14px;background:#e9e9ed"></div>
<div class="a" style="left:947px;top:175px;width:1px;height:14px;background:#e9e9ed"></div>
<div class="a" style="left:1072px;top:175px;width:1px;height:14px;background:#e9e9ed"></div>
<div class="t " style="left:698.7px;top:177px;;transform:scaleX(0.8793)">Nuggets - 300 g</div>
<div class="n " style="left:825.3px;width:120px;top:177px;">156.00</div>
<div class="a" style="left:950.3px;top:177px;width:21.084px;height:10px;background:linear-gradient(#a9d42c,#97c41e 50%,#86b019);border-radius:2.2px"></div>
<div class="t c" style="left:958.5px;top:177px;width:105px;transform:scaleX(.926)">17.57%</div>
<div class="n " style="left:1076.2px;width:120px;top:177px;">($11,107.28)</div>
<div class="a" style="left:696px;top:189px;width:502px;height:14px;background:#ffffff;border-bottom:1px solid #e9e9ed"></div>
<div class="a" style="left:821px;top:189px;width:1px;height:14px;background:#e9e9ed"></div>
<div class="a" style="left:947px;top:189px;width:1px;height:14px;background:#e9e9ed"></div>
<div class="a" style="left:1072px;top:189px;width:1px;height:14px;background:#e9e9ed"></div>
<div class="t " style="left:698.7px;top:191px;;transform:scaleX(0.8634)">Filé de Peito - 500 g</div>
<div class="n " style="left:825.3px;width:120px;top:191px;">155.00</div>
<div class="a" style="left:950.3px;top:191px;width:20.94px;height:10px;background:linear-gradient(#a9d42c,#97c41e 50%,#86b019);border-radius:2.2px"></div>
<div class="t c" style="left:958.5px;top:191px;width:105px;transform:scaleX(.926)">17.45%</div>
<div class="n " style="left:1076.2px;width:120px;top:191px;">($11,036.08)</div>
<div class="a" style="left:696px;top:203px;width:502px;height:14px;background:#f9f9fa;border-bottom:1px solid #e9e9ed"></div>
<div class="a" style="left:821px;top:203px;width:1px;height:14px;background:#e9e9ed"></div>
<div class="a" style="left:947px;top:203px;width:1px;height:14px;background:#e9e9ed"></div>
<div class="a" style="left:1072px;top:203px;width:1px;height:14px;background:#e9e9ed"></div>
<div class="t " style="left:698.7px;top:205px;;transform:scaleX(0.8705)">Filé de Frango - 450 g</div>
<div class="n " style="left:825.3px;width:120px;top:205px;">154.00</div>
<div class="a" style="left:950.3px;top:205px;width:20.808px;height:10px;background:linear-gradient(#a9d42c,#97c41e 50%,#86b019);border-radius:2.2px"></div>
<div class="t c" style="left:958.5px;top:205px;width:105px;transform:scaleX(.926)">17.34%</div>
<div class="n " style="left:1076.2px;width:120px;top:205px;">($10,964.88)</div>
<div class="a" style="left:696px;top:217px;width:502px;height:15px;background:#ffffff;border-bottom:1px solid #e9e9ed"></div>
<div class="a" style="left:821px;top:217px;width:1px;height:15px;background:#e9e9ed"></div>
<div class="a" style="left:947px;top:217px;width:1px;height:15px;background:#e9e9ed"></div>
<div class="a" style="left:1072px;top:217px;width:1px;height:15px;background:#e9e9ed"></div>
<div class="t " style="left:698.7px;top:219px;;transform:scaleX(0.8686)">Filezinho de Frango - 300 g</div>
<div class="n " style="left:825.3px;width:120px;top:219px;">152.00</div>
<div class="a" style="left:950.3px;top:219px;width:20.544px;height:11px;background:linear-gradient(#a9d42c,#97c41e 50%,#86b019);border-radius:2.2px"></div>
<div class="t c" style="left:958.5px;top:219px;width:105px;transform:scaleX(.926)">17.12%</div>
<div class="n " style="left:1076.2px;width:120px;top:219px;">($10,822.48)</div>
<div class="a" style="left:696px;top:232px;width:502px;height:14px;background:#f9f9fa;border-bottom:1px solid #e9e9ed"></div>
<div class="a" style="left:821px;top:232px;width:1px;height:14px;background:#e9e9ed"></div>
<div class="a" style="left:947px;top:232px;width:1px;height:14px;background:#e9e9ed"></div>
<div class="a" style="left:1072px;top:232px;width:1px;height:14px;background:#e9e9ed"></div>
<div class="t " style="left:698.7px;top:234px;;transform:scaleX(0.8804)">Peito de Frango - 500 g</div>
<div class="n " style="left:825.3px;width:120px;top:234px;">136.00</div>
<div class="a" style="left:950.3px;top:234px;width:18.384px;height:10px;background:linear-gradient(#a9d42c,#97c41e 50%,#86b019);border-radius:2.2px"></div>
<div class="t c" style="left:958.5px;top:234px;width:105px;transform:scaleX(.926)">15.32%</div>
<div class="n " style="left:1076.2px;width:120px;top:234px;">($9,683.27)</div>
<div class="a" style="left:696px;top:246px;width:502px;height:14px;background:#ffffff;border-bottom:1px solid #e9e9ed"></div>
<div class="a" style="left:696px;top:246px;width:126px;height:14px;background:#f3f3f5;border-bottom:1px solid #e9e9ed"></div>
<div class="a" style="left:822px;top:246px;width:376px;height:14px;background:#bfbfbf;border-bottom:1px solid #d2d2d2"></div>
<div class="a" style="left:821px;top:246px;width:1px;height:14px;background:#d0d0d0"></div>
<div class="a" style="left:947px;top:246px;width:1px;height:14px;background:#d0d0d0"></div>
<div class="a" style="left:1072px;top:246px;width:1px;height:14px;background:#d0d0d0"></div>
<div class="t " style="left:698.7px;top:248px;;transform:scaleX(0.8782)">Coxa - 400 g</div>
<div class="n " style="left:825.3px;width:120px;top:248px;">135.00</div>
<div class="a" style="left:950.3px;top:248px;width:18.24px;height:10px;background:linear-gradient(#a9d42c,#97c41e 50%,#86b019);border-radius:2.2px"></div>
<div class="t c" style="left:958.5px;top:248px;width:105px;transform:scaleX(.926)">15.20%</div>
<div class="n " style="left:1076.2px;width:120px;top:248px;">($9,612.07)</div>
<svg style="left:659px;top:146px" width="32" height="130" viewBox="659 146 32 130"><g stroke="#203052" stroke-width="1" fill="none"><path d="M674.4 180.6 V251.9"/><path d="M674.4 180.6 H688"/><path d="M674.4 194.8 H688"/><path d="M662 209.1 H688"/><path d="M674.4 223.4 H688"/><path d="M674.4 237.6 H688"/><path d="M674.4 251.9 H688"/></g><g fill="#0f1a3a"><path d="M686.4 178.0 L690.4 180.6 L686.4 183.2 Z"/><path d="M686.4 192.2 L690.4 194.8 L686.4 197.4 Z"/><path d="M686.4 206.5 L690.4 209.1 L686.4 211.7 Z"/><path d="M686.4 220.8 L690.4 223.4 L686.4 226.0 Z"/><path d="M686.4 235.0 L690.4 237.6 L686.4 240.2 Z"/><path d="M686.4 249.3 L690.4 251.9 L686.4 254.5 Z"/><path d="M663.6 206.5 L659.6 209.1 L663.6 211.7 Z"/></g></svg>
<div class="a" style="left:0px;top:633px;width:1200px;height:1px;background:#7f96c6"></div>
<div class="a" style="left:0px;top:634px;width:1200px;height:16px;background:linear-gradient(#edf2fa 0,#e0e9f6 2px,#d3dff1 50%,#c1d0e8)"></div>
<svg style="left:5.2px;top:638.2px" width="10.4" height="10.4" viewBox="0 0 10.4 10.4"><defs><radialGradient id="gl" cx=".35" cy=".3" r=".8"><stop offset="0" stop-color="#6fa6f2"/><stop offset=".55" stop-color="#1f4fd0"/><stop offset="1" stop-color="#142f98"/></radialGradient></defs><circle cx="5.2" cy="5.2" r="5" fill="url(#gl)"/><path d="M2 2.6 C3.4 1.6 4.6 2.4 4.4 3.8 C4.2 5 2.8 5 2.6 6.6 C1.6 5.6 1.2 3.8 2 2.6 Z M6.2 4.4 C7.4 3.8 8.8 4.6 8.6 6 C8.2 7.6 7 8.6 6 8.2 C5.4 7 5.4 5.4 6.2 4.4 Z" fill="#5ec43a"/></svg>
<div class="t " style="left:20px;top:638px;;transform:scaleX(0.8823)">Idioma: Português</div>
<div class="a" style="left:90.6px;top:636px;width:1px;height:12px;background:#c0cbe0"></div>
<div class="a" style="left:91.6px;top:636px;width:1px;height:12px;background:#e2eaf6"></div>
<svg style="left:97.4px;top:637.4px" width="12.4" height="11.6" viewBox="0 0 12.4 11.6"><path d="M.4 11.4 C.4 7.6 3 6.4 6.2 6.4 C9.4 6.4 12 7.6 12 11.4 Z" fill="#8ecb68" stroke="#73b552" stroke-width=".6"/><circle cx="6.2" cy="3.5" r="3" fill="#a2d880" stroke="#73b552" stroke-width=".6"/><path d="M2.4 10.6 C2.6 8.6 4 7.6 6.2 7.6" stroke="#c6e8b0" stroke-width=".9" fill="none"/></svg>
<div class="t " style="left:113px;top:638px;;transform:scaleX(0.8560)">Meu Perfil: myabcm</div>
<div class="a" style="left:968.6px;top:636px;width:1px;height:12px;background:#c0cbe0"></div>
<div class="a" style="left:969.6px;top:636px;width:1px;height:12px;background:#e2eaf6"></div>
<div class="a" style="left:1065.4px;top:636px;width:1px;height:12px;background:#c0cbe0"></div>
<div class="a" style="left:1066.4px;top:636px;width:1px;height:12px;background:#e2eaf6"></div>
<div class="a" style="left:1176.4px;top:636px;width:1px;height:12px;background:#c0cbe0"></div>
<div class="a" style="left:1177.4px;top:636px;width:1px;height:12px;background:#e2eaf6"></div>
<div class="t " style="left:975.8px;top:638px;;transform:scaleX(0.8612)">Visão Origem: Standard</div>
<div class="t " style="left:1071.8px;top:638px;;transform:scaleX(0.8577)">Visão Destino: Asignaciones</div>
<svg style="left:1184.4px;top:637.8px" width="10" height="12" viewBox="0 0 10 12"><path d="M1 0 V11.4" stroke="#3c4a44" stroke-width="1.2"/><path d="M1.6 1.5 L9.4 4 L1.6 6.6 Z" fill="#40c022"/></svg>
</body></html>
